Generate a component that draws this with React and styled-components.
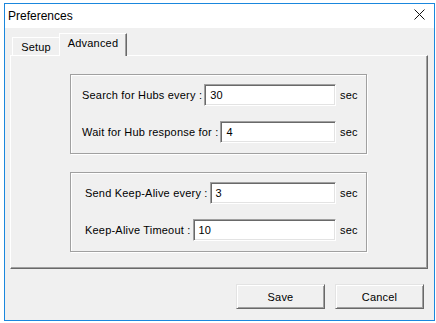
import React from "react";
import styled, { createGlobalStyle } from "styled-components";

const Global = createGlobalStyle`
  html, body {
    margin: 0;
    padding: 0;
    background: #ffffff;
  }
  body {
    font-family: "Liberation Sans", Arial, sans-serif;
    font-size: 11px;
    letter-spacing: 0.2px;
    color: #000;
  }
`;

const Window = styled.div`
  box-sizing: border-box;
  width: 431px;
  height: 318px;
  margin: 3px 0 0 4px;
  border: 1px solid #1a87dd;
  background: #f0f0f0;
  display: flex;
  flex-direction: column;
`;

const TitleBar = styled.div`
  height: 24px;
  background: #ffffff;
  display: flex;
  align-items: center;
  padding-left: 3px;
  font-size: 12px;
  letter-spacing: 0;
`;

const Title = styled.div`
  flex: 1;
  padding-bottom: 1px;
`;

const CloseButton = styled.div`
  width: 30px;
  height: 24px;
  display: flex;
  align-items: center;
  justify-content: center;
  padding-bottom: 3px;
  box-sizing: border-box;
`;

const Body = styled.div`
  flex: 1;
  padding: 5px 6px 0 5px;
  display: flex;
  flex-direction: column;
`;

const TabStrip = styled.div`
  height: 22px;
  display: flex;
  align-items: flex-end;
  padding-left: 2px;
  position: relative;
  z-index: 1;
`;

const Tab = styled.div`
  box-sizing: border-box;
  height: ${({ active }) => (active ? "23px" : "18px")};
  width: ${({ w }) => w}px;
  margin-bottom: ${({ active }) => (active ? "-1px" : "0")};
  margin-left: ${({ active }) => (active ? "-1px" : "0")};
  background: #f0f0f0;
  border-top: 1px solid #fff;
  border-left: 1px solid #fff;
  border-right: 1px solid ${({ active }) => (active ? "#696969" : "#a0a0a0")};
  box-shadow: ${({ active }) => (active ? "inset -1px 0 0 #a0a0a0" : "none")};
  display: flex;
  justify-content: center;
  padding-top: 3px;
`;

const Panel = styled.div`
  box-sizing: border-box;
  height: 214px;
  border-top: 1px solid #fff;
  border-left: 1px solid #fff;
  border-right: 1px solid #696969;
  border-bottom: 1px solid #696969;
  box-shadow: inset -1px -1px 0 #a0a0a0;
  padding: 18px 0 0 59px;
  display: flex;
  flex-direction: column;
  gap: 18px;
`;

const Group = styled.div`
  box-sizing: border-box;
  width: 297px;
  border: 1px solid #a0a0a0;
  box-shadow: inset 1px 1px 0 #fff, 1px 1px 0 #fff;
  padding: 9px 0 10px ${({ indent }) => indent}px;
  display: flex;
  flex-direction: column;
  gap: 15px;
`;

const Row = styled.div`
  display: flex;
  align-items: center;
  height: 22px;
`;

const Label = styled.span`
  white-space: nowrap;
  margin-right: 2px;
`;

const Field = styled.div`
  flex: 1;
  box-sizing: border-box;
  height: 22px;
  background: #fff;
  border-top: 1px solid #a0a0a0;
  border-left: 1px solid #a0a0a0;
  border-right: 1px solid #fff;
  border-bottom: 1px solid #fff;
  box-shadow: inset 1px 1px 0 #696969, inset -1px -1px 0 #e3e3e3;
  padding: 0 0 0 5px;
  display: flex;
  align-items: center;
`;

const Unit = styled.span`
  width: 26px;
  margin-left: 4px;
`;

const Buttons = styled.div`
  display: flex;
  justify-content: flex-end;
  gap: 10px;
  margin-top: 15px;
  margin-right: 4px;
`;

const Button = styled.div`
  box-sizing: border-box;
  width: 89px;
  height: 25px;
  background: #f0f0f0;
  border-top: 1px solid #e3e3e3;
  border-left: 1px solid #e3e3e3;
  border-right: 1px solid #696969;
  border-bottom: 1px solid #696969;
  box-shadow: inset 1px 1px 0 #fff, inset -1px -1px 0 #a0a0a0;
  display: flex;
  align-items: center;
  justify-content: center;
`;

const groups = [
  {
    indent: 11,
    rows: [
      { label: "Search for Hubs every :", value: "30" },
      { label: "Wait for Hub response for :", value: "4" },
    ],
  },
  {
    indent: 14,
    rows: [
      { label: "Send Keep-Alive every :", value: "3" },
      { label: "Keep-Alive Timeout :", value: "10" },
    ],
  },
];

export default function App() {
  return (
    <>
      <Global />
      <Window>
        <TitleBar>
          <Title>Preferences</Title>
          <CloseButton>
            <svg width="11" height="11" viewBox="0 0 11 11">
              <path d="M0.5 0.5 L10.5 10.5 M10.5 0.5 L0.5 10.5" stroke="#111" strokeWidth="1" fill="none" />
            </svg>
          </CloseButton>
        </TitleBar>
        <Body>
          <TabStrip>
            <Tab w={48}>Setup</Tab>
            <Tab active w={68}>Advanced</Tab>
          </TabStrip>
          <Panel>
            {groups.map((g, i) => (
              <Group key={i} indent={g.indent}>
                {g.rows.map((r) => (
                  <Row key={r.label}>
                    <Label>{r.label}</Label>
                    <Field>{r.value}</Field>
                    <Unit>sec</Unit>
                  </Row>
                ))}
              </Group>
            ))}
          </Panel>
          <Buttons>
            <Button>Save</Button>
            <Button>Cancel</Button>
          </Buttons>
        </Body>
      </Window>
    </>
  );
}
